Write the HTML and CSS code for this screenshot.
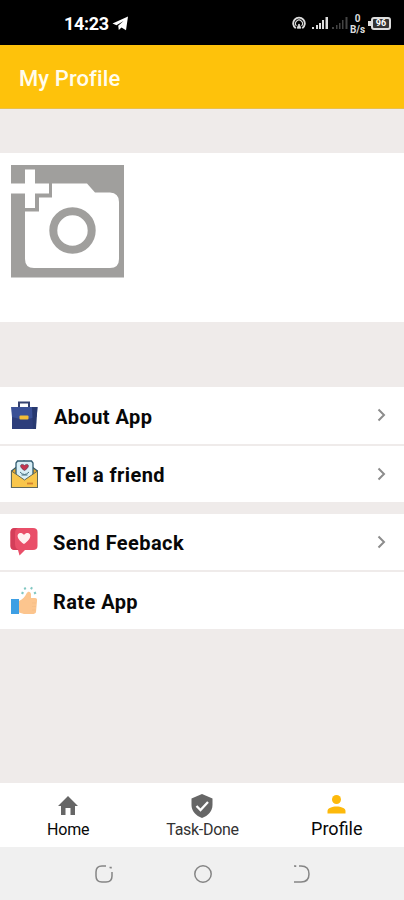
FILE: index.html
```
<!DOCTYPE html>
<html lang="en">
<head>
<meta charset="utf-8">
<title>My Profile</title>
<link rel="stylesheet" href="styles.css">
</head>
<body>
<div class="status">
  <div class="clock"><span>14:23</span>
    <svg width="17" height="15" viewBox="0 0 17 15"><path d="M0.5 7.500 16 .5 14 14.200 9.500 11.500 6.800 14 6.200 9.700 11.500 5 4.500 9.200z" fill="#fff"/></svg>
  </div>
  <div class="signals">
    <svg class="cast" width="14" height="14" viewBox="0 0 15 15" fill="none" stroke="#ddd"><path d="M4 13A6.200 6.200 0 1 1 11 13" stroke-width="2"/><path d="M4.700 10.500A3.700 3.700 0 1 1 10.300 10.500" stroke-width="1.200"/><path d="M5.500 13 7.500 8.500 9.500 13z" fill="#ddd"/></svg>
    <svg class="bars" width="17" height="13" viewBox="0 0 17 13" fill="#ddd"><path d="M0 10h2v2H0zM4 8h2v4H4zM7 6h2v6H7zM10 3h2v9h-2zM13.500 0h2.500v12h-2.500z"/></svg>
    <svg class="bars dim" width="17" height="13" viewBox="0 0 17 13" fill="#444"><path d="M0 10h2v2H0zM4 8h1.500v4H4zM7 6h1.500v6H7zM10 3h1.500v9h-1.500zM13.500 0h2v12h-2z"/></svg>
    <div class="rate"><span>0</span><span>B/s</span></div>
    <div class="battery"><span>96</span></div>
  </div>
</div>
<header class="header"><h1>My Profile</h1></header>
<section class="photo">
  <svg width="114" height="114" viewBox="0 0 114 114">
    <path d="M0 0H113V112.500H0z" fill="#a09f9d"/>
    <path d="M41 18.500H76L84 27.500H99Q108 28 108 37V94Q108 103 99 103H23Q14 103 14 94V46.500H28V32.500H41z" fill="#fff"/>
    <path d="M0 18.500H14V4.500H24V18.500H38V28.500H24V43H14V28.500H0z" fill="#fff"/>
    <circle cx="61.500" cy="65.500" r="19.200" fill="none" stroke="#a09f9d" stroke-width="8"/>
  </svg>
</section>
<main class="menu">
  <div class="group">
    <div class="row">
      <svg class="icon" width="28" height="28" viewBox="0 0 28 28"><path d="M9 6V1.500h10V6" fill="none" stroke="#34416f" stroke-width="2"/><path d="M2 14H26V28H2z" fill="#2d3e7b"/><path d="M1 6H27.500L26.500 16Q20 18 14 18T2 16z" fill="#3a5096"/><path d="M22 6h5.500L26 28h-3z" fill="#273970"/><rect x="9.500" y="14.500" width="9" height="4" rx="1" fill="#f4bd35"/></svg>
      <span class="label about">About App</span>
      <svg class="chev" width="9" height="14" viewBox="0 0 9 14"><path d="M1.500 1.500 7 7 1.500 12.500"/></svg>
    </div>
    <div class="row">
      <svg class="icon" width="28" height="28" viewBox="0 0 28 28"><path d="M1.500 11 14 1 27.500 11V27.500H1.500z" fill="#ecaa2e" stroke="#365a68" stroke-width="1.200"/><path d="M7.500 1h14l1.500 2v14L14.500 22 6 16V3z" fill="#d9eff7" stroke="#315b70" stroke-width="1.300"/><path d="M14.500 10.500C7.500 6 11.500 2.500 14.500 5.500 17.500 2.500 21.500 6 14.500 10.500z" fill="#c6354f" stroke="#574158" stroke-width=".7"/><path d="M10 12q4.500 5 9 0M11.500 15h6" fill="none" stroke="#477080"/><path d="M1.500 11l13 9 13-9v16.500h-26z" fill="#f9c64b" stroke="#62695a"/><path d="M17 23.500h6" stroke="#d4812e" stroke-width="1.800"/></svg>
      <span class="label">Tell a friend</span>
      <svg class="chev" width="9" height="14" viewBox="0 0 9 14"><path d="M1.500 1.500 7 7 1.500 12.500"/></svg>
    </div>
  </div>
  <div class="group">
    <div class="row">
      <svg class="icon" width="28" height="28" viewBox="0 0 28 28"><path d="M5 0H23Q27.500 0 27.500 4V18Q27.500 22 23 22H15L9.500 27.500 8 22H5Q.5 22 .5 18V4Q.5 0 5 0z" fill="#e94f69"/><path d="M5 0H8Q5 1 5 5V16Q5 21 9 22H5Q.5 22 .5 18V4Q.5 0 5 0z" fill="#d43e59"/><path d="M14 16C2 8 10 1.500 14 7 18 1.500 26 8 14 16z" fill="#fff1f1"/></svg>
      <span class="label">Send Feeback</span>
      <svg class="chev" width="9" height="14" viewBox="0 0 9 14"><path d="M1.500 1.500 7 7 1.500 12.500"/></svg>
    </div>
    <div class="row">
      <svg class="icon" width="28" height="28" viewBox="0 0 28 28"><path d="M1 13H9V28H1z" fill="#3d9fe4"/><path d="M9 15C13 13 15 11 16.500 7.500 18 4.500 21 5.500 21 8.500V12H25Q27.500 12 27 15L26 26Q25.500 28 22 28H14L9 26.500z" fill="#fcc58e"/><path d="M22 17h4M22 20.500h4M22 24h3.500" stroke="#f4bc85" stroke-width=".7"/><path d="M14.500 1.500 15.500 3.500M22 1.200 21 3.200M11.500 6.500l2 1M26 6.500 24 7.500" stroke="#80c7c2" stroke-width="2"/></svg>
      <span class="label">Rate App</span>
    </div>
  </div>
</main>
<nav class="tabs">
  <div class="tab home"><svg width="20" height="20" viewBox="0 0 20 20"><path d="M10 0 20 10H17V19H12.500V12H7.500V19H3V10H0z" fill="#666"/></svg><span>Home</span></div>
  <div class="tab task"><svg width="22" height="25" viewBox="0 0 22 25"><path d="M11 0 21.500 4.500V11C21.500 17 17 22 11 24 5 22 .5 17 .5 11V4.500z" fill="#666"/><path d="M5.500 12 9.500 16 17 8" fill="none" stroke="#fff" stroke-width="2.300"/></svg><span>Task-Done</span></div>
  <div class="tab profile"><svg width="19" height="19" viewBox="0 0 19 19" fill="#fdb90b"><circle cx="9.500" cy="4.500" r="4.500"/><path d="M.5 18.500V16C.5 10 18.500 10 18.500 16V18.500z"/></svg><span>Profile</span></div>
</nav>
<div class="system">
  <svg width="18" height="18" viewBox="0 0 18 18"><path d="M11 1H7Q1 1 1 7V11Q1 17 7 17H11Q17 17 17 11V7"/><path d="M14.500 2.500h1.500v1"/></svg>
  <svg width="18" height="18" viewBox="0 0 18 18"><circle cx="9" cy="9" r="8.200"/></svg>
  <svg width="18" height="18" viewBox="0 0 18 18"><path d="M6 1H8Q16 1 16 9T8 17H1M1 1h1.500v1"/></svg>
</div>
</body>
</html>
```
FILE: styles.css
```
* { box-sizing: border-box; }
body { margin: 0; width: 404px; height: 900px; display: flex; flex-direction: column; background: #efebea; font-family: Roboto, sans-serif; color: #080808; overflow: hidden; }
svg { display: block; flex: none; }
span { white-space: nowrap; }
.status { height: 45px; background: #000; color: #fff; display: flex; justify-content: space-between; padding: 0 13px 0 64px; }
.clock { display: flex; align-items: center; height: 47px; font-size: 18px; font-weight: 700; letter-spacing: -0.3px; gap: 3px; }
.signals { display: flex; align-items: center; height: 46px; }
.bars { margin-left: 6px; }
.dim { margin-left: 3px; }
.rate { display: flex; flex-direction: column; align-items: center; margin-left: 1px; width: 15px; font-size: 10px; line-height: 11px; font-weight: 700; color: #ddd; margin-top: 1px; }
.battery { position: relative; width: 20px; height: 13px; margin-left: 6px; border: 2px solid #ddd; border-radius: 3px; display: flex; align-items: center; justify-content: center; font-size: 9px; font-weight: 700; background: #333; }
.battery::before { content: ""; position: absolute; left: -5px; top: 2px; width: 3px; height: 5px; background: #ddd; }
.header { height: 64px; background: #fec20b; display: flex; align-items: center; padding: 3px 19px 0; color: #fffced; border-bottom: 1px solid #eac04a; }
h1 { margin: 0; font-size: 22px; font-weight: 500; letter-spacing: 0.1px; }
.photo { margin-top: 44px; height: 169px; background: #fff; padding: 12px 11px; }
.menu { margin-top: 65px; display: flex; flex-direction: column; gap: 12px; }
.group { display: flex; flex-direction: column; gap: 2px; }
.row { height: 57px; background: #fff; display: flex; align-items: center; padding: 0 18px 1px 10px; }
.group:first-child .row + .row { height: 56px; }
.group:last-child .row:first-child { height: 56px; }
.label { margin-left: 15px; font-size: 20px; font-weight: 700; letter-spacing: 0.42px; padding-top: 3px; }
.label.about { margin-left: 16px; }
.chev { margin-left: auto; fill: none; stroke: #8c8c8c; stroke-width: 2; }
.tabs { margin-top: auto; height: 64px; background: #fff; display: grid; grid-template-columns: repeat(3, 1fr); padding-left: 1px; }
.tab { display: flex; flex-direction: column; align-items: center; font-size: 16px; line-height: 18px; letter-spacing: -0.2px; }
.home svg { margin: 13px 0 5px; }
.task svg { margin: 11px 0 2px; }
.task { color: #333; letter-spacing: -0.3px; }
.profile svg { margin: 12px 0 5px; }
.profile { font-size: 18px; line-height: 20px; letter-spacing: 0; }
.system { height: 53px; background: #f0f0f0; display: flex; justify-content: center; align-items: center; gap: 81px; padding-left: 1px; fill: none; stroke: #858585; stroke-width: 1.5px; }
```
